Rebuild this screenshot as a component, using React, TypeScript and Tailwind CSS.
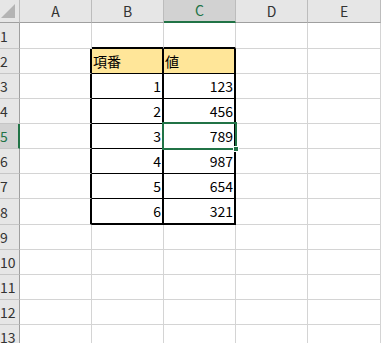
import type { ReactNode } from "react";

const font = { fontFamily: '"Noto Sans CJK JP", "Noto Sans", sans-serif' };

const columns = ["A", "B", "C", "D", "E"];
const colWidths = ["w-[72px]", "w-[72px]", "w-[72px]", "w-[72px]", "w-[73px]"];
const rowHeights = [
  "h-[26px]",
  "h-[25px]",
  "h-[25px]",
  "h-[25px]",
  "h-[25px]",
  "h-[25px]",
  "h-[25px]",
  "h-[26px]",
  "h-[25px]",
  "h-[25px]",
  "h-[25px]",
  "h-[25px]",
  "h-[25px]",
];

const values = [123, 456, 789, 987, 654, 321];

function Corner() {
  return (
    <div className="w-[20px] h-[23px] shrink-0 bg-[#e6e6e6] border-r border-b border-r-[#bcbcbc] border-b-[#9f9f9f] flex items-end justify-end">
      <svg width="16" height="16" viewBox="0 0 16 16" className="mb-[3px] mr-[3px]">
        <polygon points="1,15 15,15 15,1" fill="#b4b4b4" />
      </svg>
    </div>
  );
}

function cellClass(row: number, col: number) {
  // row is 1-based sheet row, col 0 = A
  const inTable = row >= 2 && row <= 8;
  let right = "border-r border-r-[#d4d4d4]";
  let bottom = "border-b border-b-[#d4d4d4]";
  let bg = "bg-white";

  if (inTable && col === 0) right = "border-r-2 border-r-black";
  if (inTable && (col === 1 || col === 2)) {
    right = "border-r-2 border-r-black";
    bottom = row === 8 ? "border-b-2 border-b-black" : "border-b border-b-black";
  }
  if (row === 1 && (col === 1 || col === 2)) bottom = "border-b-2 border-b-black";
  if (row === 2 && (col === 1 || col === 2)) bg = "bg-[#ffe699]";

  return `${right} ${bottom} ${bg}`;
}

function cellContent(row: number, col: number): ReactNode {
  if (row === 2 && col === 1) return <span className="pl-[1px]">項番</span>;
  if (row === 2 && col === 2) return <span className="pl-[1px]">値</span>;
  if (row >= 3 && row <= 8 && col === 1) return row - 2;
  if (row >= 3 && row <= 8 && col === 2) return values[row - 3];
  return null;
}

export default function App() {
  const selectedRow = 5;
  const selectedCol = 2;

  return (
    <div className="w-[381px] h-[343px] overflow-hidden bg-white text-[14px] text-black" style={font}>
      <div className="flex">
        <Corner />
        {columns.map((c, i) => (
          <div
            key={c}
            className={`${colWidths[i]} h-[23px] shrink-0 flex items-center justify-center border-r border-r-[#bcbcbc] ${
              i === selectedCol
                ? "bg-[#d2d2d2] text-[#217346] border-b-2 border-b-[#217346]"
                : "bg-[#e6e6e6] text-[#333] border-b border-b-[#9f9f9f]"
            }`}
          >
            {c}
          </div>
        ))}
      </div>

      {rowHeights.map((h, r) => {
        const row = r + 1;
        return (
          <div key={row} className="flex">
            <div
              className={`w-[20px] ${h} shrink-0 flex items-center leading-none border-b border-b-[#c6c6c6] ${
                row === selectedRow
                  ? "bg-[#d2d2d2] text-[#217346] border-r-2 border-r-[#217346]"
                  : "bg-[#e6e6e6] text-[#333] border-r border-r-[#9f9f9f]"
              }`}
            >
              {row}
            </div>
            {columns.map((c, i) => {
              const content = cellContent(row, i);
              const alignRight = row >= 3 && (i === 1 || i === 2);
              const selected = row === selectedRow && i === selectedCol;
              return (
                <div
                  key={c}
                  className={`${colWidths[i]} ${h} shrink-0 relative flex items-center leading-none ${
                    alignRight ? "justify-end pr-[1px]" : "justify-start"
                  } ${cellClass(row, i)}`}
                >
                  {content}
                  {selected ? (
                    <div className="absolute z-10 left-[-2px] top-[-2px] right-[-3px] bottom-[-2px] border-2 border-[#217346]">
                      <div className="absolute right-[-4px] bottom-[-4px] w-[6px] h-[6px] bg-[#217346] border border-white" />
                    </div>
                  ) : null}
                </div>
              );
            })}
          </div>
        );
      })}
    </div>
  );
}
